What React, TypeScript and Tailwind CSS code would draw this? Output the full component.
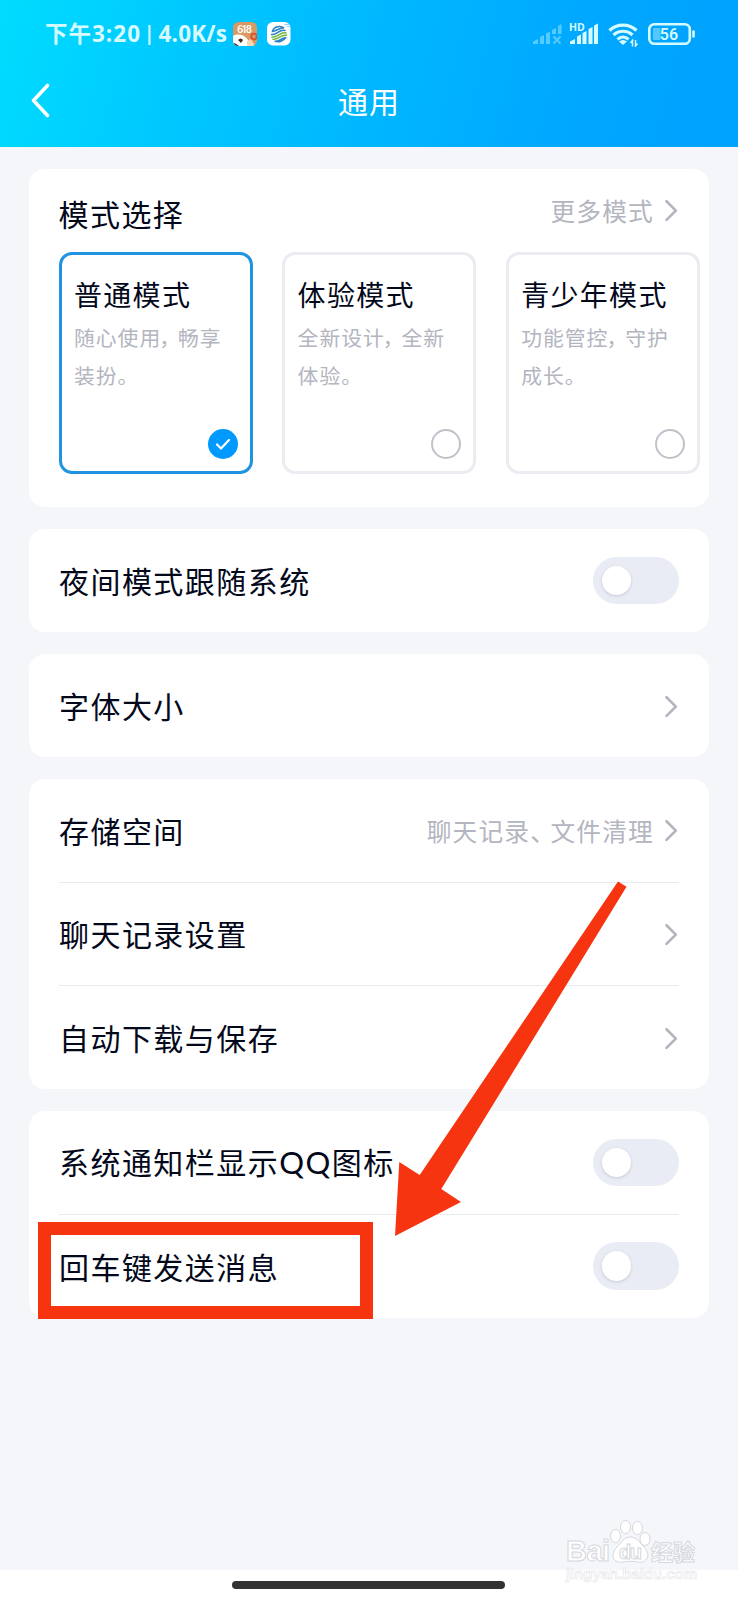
import { ReactNode } from "react";

const MODES = [
  { title: "普通模式", line: ["随心使用", "畅享"], rest: "装扮。", active: true },
  { title: "体验模式", line: ["全新设计", "全新"], rest: "体验。", active: false },
  { title: "青少年模式", line: ["功能管控", "守护"], rest: "成长。", active: false },
];

function Chevron() {
  return (
    <svg className="shrink-0" width="15" height="24" viewBox="0 0 15 24" fill="none" stroke="#b3b5bf" strokeWidth="2.7" strokeLinecap="round" strokeLinejoin="round">
      <path d="M2.5 3.3 11.8 12.6 2.5 21.9" />
    </svg>
  );
}

function Toggle() {
  return (
    <div className="flex h-[47.5px] w-[86.5px] shrink-0 items-center rounded-full bg-[#e9ecf4] pl-[9px]">
      <div className="h-[29.5px] w-[29.5px] rounded-full bg-white shadow-[0_1px_3px_rgba(90,95,120,0.25)]" />
    </div>
  );
}

function Card({ children }: { children: ReactNode }) {
  return <section className="rounded-[16px] bg-white px-[30px]">{children}</section>;
}

function Row({ label, divider, children }: { label: ReactNode; divider?: boolean; children: ReactNode }) {
  return (
    <div className={`flex h-[103.4px] items-center justify-between ${divider ? "border-b border-[#e9eaee]" : ""}`}>
      <span className="pb-px text-[30px] leading-none tracking-[1.45px]">{label}</span>
      {children}
    </div>
  );
}

function ShopIcon() {
  return (
    <svg width="24" height="24" viewBox="0 0 24 24">
      <clipPath id="shop"><rect width="24" height="24" rx="5.5" /></clipPath>
      <g clipPath="url(#shop)">
        <rect width="24" height="24" fill="#d89a63" />
        <path d="M0 14c5-3 12-1 15 4l2 6H0z" fill="#fff" />
        <path d="M5 18q3-3 5 0l-2 3z" fill="#3c2a22" />
        <path d="M1 21q3 1 5 3H1z" fill="#3c2a22" />
        <path d="M14 19l4-2 4 7h-8z" fill="#f2d8b6" />
        <circle cx="21" cy="14.5" r="2.8" fill="none" stroke="#dd4f2e" strokeWidth="1.8" />
        <text x="4" y="11" fontSize="11" fontWeight="500" fill="#fff" textLength="15" fontFamily="Roboto, sans-serif">618</text>
      </g>
    </svg>
  );
}

function MobileIcon() {
  return (
    <svg width="24" height="24" viewBox="0 0 24 24" fill="none" strokeLinecap="round">
      <rect width="23.5" height="23.5" rx="6" fill="#fff" />
      <g strokeWidth="1.5">
        <path d="M5.5 9.5c1-5 8-6.500 11.500-3.500-4-1-8 3.500-11.500 3.500z" stroke="#2a80c4" />
        <path d="M4.500 12.500C10 13.500 12 7 18 8.500" stroke="#2a80c4" />
        <path d="M5 15C11 16 13 9.500 19 11" stroke="#72b83c" />
        <path d="M6 17.300C12 18 13.500 12 19.500 13.300" stroke="#72b83c" />
        <path d="M8 19.300C13 20 14.500 15.500 18.500 15.800 16.500 19 12 20.500 8 19.300" stroke="#2a80c4" />
      </g>
      <path d="M18 2.500h4M20 4.500h3" stroke="#8fd0ff" strokeWidth="1" />
    </svg>
  );
}

function StatusBar() {
  return (
    <div className="flex h-[68px] items-center justify-between pl-[45px] pr-[42px] text-[#d5fbff]">
      <div className="flex items-center">
        <span className="flex w-[188px] items-center whitespace-nowrap pt-px font-['Open_Sans','Noto_Sans_CJK_SC',sans-serif] text-[22.5px] font-bold leading-none">
          <span className="tracking-[1px]">下午3:20</span>
          <span className="pb-[3px] pl-[3px] pr-[4px] text-[19px] font-bold">|</span>
          <span className="tracking-[0.2px]">4.0K/s</span>
        </span>
        <ShopIcon />
        <span className="w-[10px]" />
        <MobileIcon />
      </div>
      <div className="flex items-center">
        <svg width="29" height="22" viewBox="0 0 29 22" fill="currentColor" opacity="0.4">
          <path d="M0 21v-2.500l5-2.500v5zM7 21v-7l4-2v9zM13 21V10.500l4-2V21zM19 11V7l4-2v6zM25 11V3l3.500-2v10z" />
          <path d="m20.500 13.500 7 7m0-7-7 7" stroke="currentColor" strokeWidth="2.2" />
        </svg>
        <svg className="ml-[7px]" width="31" height="28" viewBox="1 -2 31 28" fill="currentColor">
          <text x="1" y="8.5" fontSize="10.5" fontWeight="700" fontFamily="Open Sans, sans-serif">HD</text>
          <path d="M2 22v-2.500L7 17v5zM9 22v-7.500l4-2V22zM14.500 22V11l4-2v13zM20.500 22V7l4-2v17zM26 22V3.500l4-2V22z" />
        </svg>
        <svg className="ml-[8px]" width="31" height="25" viewBox="0 0 31 25" fill="none" stroke="currentColor" strokeWidth="3.2">
          <path d="M1.500 8.500C9 1.200 21 1.200 28.500 8.500M5.500 13C11 8 19 8 24.500 13M9.500 17.300c3.200-3 7.800-3 11 0" />
          <path d="m11 19.500 4 3.500 4-3.500q-4-3-8 0z" fill="currentColor" stroke="none" />
          <path d="M24.500 24.500v-6l-2 2.500M27.500 18v6l2-2.500" strokeWidth="1.5" />
        </svg>
        <svg className="ml-[9px]" width="48" height="23" viewBox="0 0 48 23" fill="none">
          <rect x="1.3" y="1.3" width="40.5" height="19.5" rx="5" stroke="currentColor" strokeWidth="2.6" />
          <rect x="5" y="5" width="7.5" height="12" rx="1" fill="currentColor" opacity="0.4" />
          <path d="M45.500 8.500v5" stroke="currentColor" strokeWidth="2.6" strokeLinecap="round" />
          <text x="21" y="16.8" fontSize="16" fontWeight="600" textAnchor="middle" fill="currentColor" fontFamily="Roboto, sans-serif">56</text>
        </svg>
      </div>
    </div>
  );
}

function Watermark() {
  return (
    <svg className="absolute left-[560px] top-[1515px]" width="150" height="72" viewBox="0 0 150 72" fill="#fff" stroke="#d5d7de" strokeWidth="1">
      <ellipse cx="55.5" cy="21" rx="5" ry="6.5" />
      <ellipse cx="65.5" cy="12" rx="5" ry="6.5" />
      <ellipse cx="77.5" cy="13" rx="5" ry="6.5" />
      <ellipse cx="85" cy="24" rx="5" ry="6.5" />
      <path d="M70 22c7 0 10 6 14 10 8 8 2 17-6 15-5-1-10-1-15 0-9 2-14-7-6-15 4-4 7-10 13-10z" />
      <g fontFamily="Liberation Sans, Noto Sans CJK SC, sans-serif" fontWeight="700">
        <text x="6" y="46" fontSize="29" textLength="44">Bai</text>
        <text x="59" y="44" fontSize="20" textLength="23">du</text>
        <text x="91" y="45" fontSize="22" textLength="44">经验</text>
        <text x="6" y="64" fontSize="15" textLength="131" strokeWidth="0.6" stroke="#e3e4e8">jingyan.baidu.com</text>
      </g>
    </svg>
  );
}

export default function App() {
  return (
    <div className="relative flex h-[1600px] w-[738px] flex-col overflow-hidden bg-[#f4f6fa] font-['Noto_Sans_CJK_SC',sans-serif] text-[#03081a]">
      <header className="h-[147px] shrink-0 bg-[linear-gradient(105deg,#00dcff_0%,#00c8ff_25%,#00b6ff_52%,#00a6ff_80%,#00a2ff_100%)]">
        <StatusBar />
        <div className="flex h-[66px] items-center justify-between px-[30px] text-white">
          <svg width="22" height="36" viewBox="0 0 22 36" fill="none" stroke="currentColor" strokeWidth="3.6" strokeLinecap="round" strokeLinejoin="round">
            <path d="M17.500 2.500 3.500 17.500l14 15" />
          </svg>
          <h1 className="pb-[2px] text-[30px] leading-none tracking-[1px]">通用</h1>
          <span className="w-[22px]" />
        </div>
      </header>

      <main className="flex flex-1 flex-col gap-[21.8px] px-[29px] pt-[22px]">
        <section className="h-[338px] rounded-[16px] bg-white pl-[29.5px]">
          <div className="flex h-[83px] items-center justify-between pr-[30px]">
            <h2 className="pt-[5px] text-[30px] leading-none tracking-[1.45px]">模式选择</h2>
            <div className="flex items-center gap-[10px] text-[#b3b5bf]">
              <span className="text-[24.7px] leading-none tracking-[1.2px]">更多模式</span>
              <Chevron />
            </div>
          </div>
          <div className="flex gap-[29.6px]">
            {MODES.map((mode) => (
              <div
                key={mode.title}
                className={`relative h-[222px] w-[194px] shrink-0 rounded-[13px] border-3 pl-[12.5px] pt-[24px] ${mode.active ? "border-[#2094e0]" : "border-[#ebecf1]"}`}
              >
                <h3 className="text-[28px] leading-[30px] tracking-[1.3px]">{mode.title}</h3>
                <p className="mt-[9px] whitespace-nowrap text-[20.8px] leading-[38px] tracking-[1px] text-[#b3b5bf]">
                  {mode.line[0]}
                  <span className="-ml-[2px] tracking-[-2px]">，</span>
                  {mode.line[1]}
                  <br />
                  {mode.rest}
                </p>
                {mode.active ? (
                  <svg className="absolute bottom-[12px] right-[12px]" width="30" height="30" viewBox="0 0 30 30" fill="none">
                    <circle cx="15" cy="15" r="15" fill="#0099ff" />
                    <path d="m9 15.500 4 4 8-8.500" stroke="#fff" strokeWidth="2.2" strokeLinecap="round" strokeLinejoin="round" />
                  </svg>
                ) : (
                  <div className="absolute bottom-[12px] right-[12px] h-[30px] w-[30px] rounded-full border-2 border-[#c0c2c9]" />
                )}
              </div>
            ))}
          </div>
        </section>

        <Card>
          <Row label="夜间模式跟随系统"><Toggle /></Row>
        </Card>

        <Card>
          <Row label="字体大小"><Chevron /></Row>
        </Card>

        <Card>
          <Row label="存储空间" divider>
            <div className="flex items-center gap-[10px] text-[#b3b5bf]">
              <span className="text-[24.7px] leading-none tracking-[1.2px]">
                聊天记录<span className="tracking-[-4.5px]">、</span>文件清理
              </span>
              <Chevron />
            </div>
          </Row>
          <Row label="聊天记录设置" divider><Chevron /></Row>
          <Row label="自动下载与保存"><Chevron /></Row>
        </Card>

        <Card>
          <Row label={<>系统通知栏显示<span className="font-['Lato',sans-serif] text-[31px]">QQ</span>图标</>} divider><Toggle /></Row>
          <Row label="回车键发送消息"><Toggle /></Row>
        </Card>
      </main>

      <footer className="flex h-[30px] shrink-0 justify-center bg-white pr-px pt-[11px]">
        <div className="h-[7.5px] w-[273px] rounded-full bg-[#333]" />
      </footer>

      {/* Tutorial callout */}
      <div className="absolute left-[38px] top-[1222px] h-[97px] w-[335px] border-[13px] border-[#f63510]" />
      <svg className="absolute left-[390px] top-[875px]" width="245" height="365" viewBox="390 875 245 365">
        <path d="M618 881.500 626.500 886.800 441.300 1189 461 1202 395 1236 399.300 1162 419.700 1175z" fill="#f63510" />
      </svg>
      <Watermark />
    </div>
  );
}
